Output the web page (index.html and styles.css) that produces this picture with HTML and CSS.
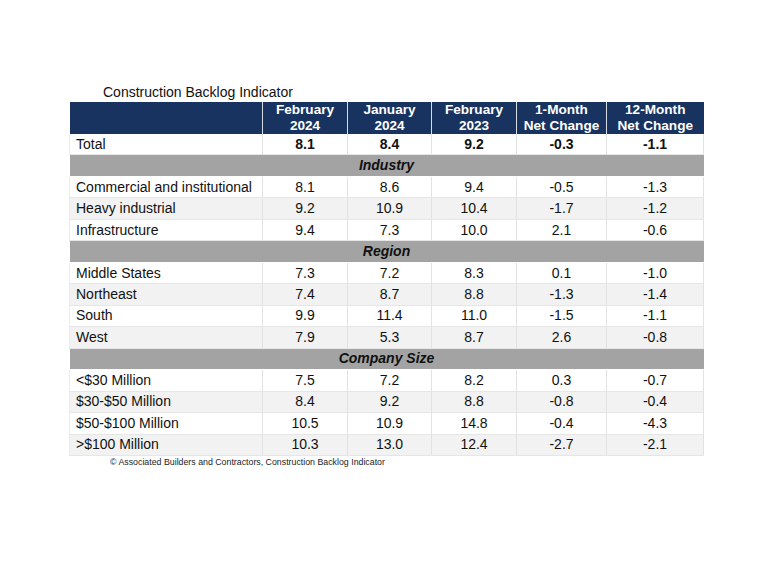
FILE: index.html
```html
<!DOCTYPE html>
<html>
<head>
<meta charset="utf-8">
<link rel="stylesheet" href="styles.css">
</head>
<body>
<div class="page">
  <div class="title">Construction Backlog Indicator</div>
  <table class="cbi">
    <colgroup>
      <col class="c0"><col class="c1"><col class="c2"><col class="c3"><col class="c4"><col class="c5">
    </colgroup>
    <thead>
      <tr>
        <th></th>
        <th>February<br>2024</th>
        <th>January<br>2024</th>
        <th>February<br>2023</th>
        <th>1-Month<br>Net Change</th>
        <th>12-Month<br>Net Change</th>
      </tr>
    </thead>
    <tbody>
      <tr class="total"><td>Total</td><td>8.1</td><td>8.4</td><td>9.2</td><td>-0.3</td><td>-1.1</td></tr>
      <tr class="sect"><td colspan="6">Industry</td></tr>
      <tr><td>Commercial and institutional</td><td>8.1</td><td>8.6</td><td>9.4</td><td>-0.5</td><td>-1.3</td></tr>
      <tr class="alt"><td>Heavy industrial</td><td>9.2</td><td>10.9</td><td>10.4</td><td>-1.7</td><td>-1.2</td></tr>
      <tr><td>Infrastructure</td><td>9.4</td><td>7.3</td><td>10.0</td><td>2.1</td><td>-0.6</td></tr>
      <tr class="sect"><td colspan="6">Region</td></tr>
      <tr><td>Middle States</td><td>7.3</td><td>7.2</td><td>8.3</td><td>0.1</td><td>-1.0</td></tr>
      <tr class="alt"><td>Northeast</td><td>7.4</td><td>8.7</td><td>8.8</td><td>-1.3</td><td>-1.4</td></tr>
      <tr><td>South</td><td>9.9</td><td>11.4</td><td>11.0</td><td>-1.5</td><td>-1.1</td></tr>
      <tr class="alt"><td>West</td><td>7.9</td><td>5.3</td><td>8.7</td><td>2.6</td><td>-0.8</td></tr>
      <tr class="sect"><td colspan="6">Company Size</td></tr>
      <tr><td>&lt;$30 Million</td><td>7.5</td><td>7.2</td><td>8.2</td><td>0.3</td><td>-0.7</td></tr>
      <tr class="alt"><td>$30-$50 Million</td><td>8.4</td><td>9.2</td><td>8.8</td><td>-0.8</td><td>-0.4</td></tr>
      <tr><td>$50-$100 Million</td><td>10.5</td><td>10.9</td><td>14.8</td><td>-0.4</td><td>-4.3</td></tr>
      <tr class="alt"><td>&gt;$100 Million</td><td>10.3</td><td>13.0</td><td>12.4</td><td>-2.7</td><td>-2.1</td></tr>
    </tbody>
  </table>
  <div class="source">© Associated Builders and Contractors, Construction Backlog Indicator</div>
</div>
</body>
</html>
```

FILE: styles.css
```css
html, body {
  margin: 0;
  padding: 0;
  background: #ffffff;
}
body {
  font-family: "Liberation Sans", Arial, sans-serif;
  color: #111111;
}
.page {
  padding: 83px 0 0 69px;
  width: 634px;
}
.title {
  font-size: 14px;
  line-height: 19px;
  padding-left: 34px;
  color: #111;
}
.cbi {
  border-collapse: collapse;
  table-layout: fixed;
  width: 634px;
  font-size: 14px;
}
.c0 { width: 193px; }
.c1 { width: 85px; }
.c2 { width: 84px; }
.c3 { width: 85px; }
.c4 { width: 90px; }
.c5 { width: 97px; }
.cbi th {
  background: #18335f;
  color: #ffffff;
  font-weight: bold;
  font-size: 13.6px;
  height: 32px;
  padding: 0;
  line-height: 16px;
  text-align: center;
  border-left: 1px solid #d8dce4;
}
.cbi th:first-child {
  border-left: none;
}
.cbi td {
  height: 20.47px;
  padding: 0;
  line-height: 15px;
  text-align: center;
  border-left: 1px solid #e2e2e2;
  border-bottom: 1px solid #e6e6e6;
}
.cbi td:first-child {
  text-align: left;
  padding-left: 6px;
  border-left: 1px solid #ececec;
}
.cbi td:last-child {
  border-right: 1px solid #e2e2e2;
}
.cbi tr.alt td {
  background: #f2f2f2;
}
.cbi tr.total td {
  font-weight: bold;
}
.cbi tr.total td:first-child {
  font-weight: normal;
}
.cbi tr.sect td {
  background: #a3a3a3;
  font-weight: bold;
  font-style: italic;
  text-align: center;
  padding-left: 0;
  border-left: none;
  border-right: none;
  border-bottom: 1px solid #ffffff;
}
.source {
  font-size: 8.8px;
  line-height: 12px;
  padding-left: 41px;
  margin-top: 0;
  color: #222;
}
```
